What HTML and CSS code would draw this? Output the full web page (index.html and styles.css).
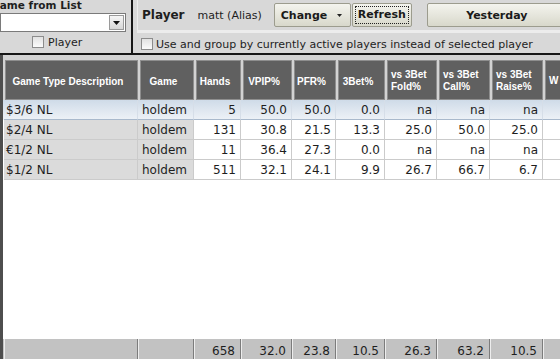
FILE: index.html
```html
<!DOCTYPE html>
<html>
<head>
	<meta charset="utf-8">
	<title>Player Stats</title>
	<link rel="stylesheet" href="styles.css">
</head>
<body>
	<div class="top">
		<div class="listPanel">
			<div class="listTitle">Name from List</div>
			<div class="combo">
				<span class="comboBtn">
					<svg width="7" height="4" viewBox="0 0 7 4"><path d="M0 0h7L3.5 4z" fill="#111"/></svg>
				</span>
			</div>
			<div class="chk"><span class="box"></span>Player</div>
		</div>
		<div class="playerPanel">
			<div class="playerRow">
				<span class="playerLabel">Player</span>
				<span class="playerName">matt (Alias)</span>
				<button class="btn change">Change <svg width="5" height="3" viewBox="0 0 5 3"><path d="M0 0h5L2.5 3z" fill="#222"/></svg></button>
				<button class="btn refresh"><span>Refresh</span></button>
				<button class="btn yesterday">Yesterday</button>
			</div>
			<div class="groupRow"><span class="box"></span>Use and group by currently active players instead of selected player</div>
		</div>
	</div>

	<div class="grid">
		<div class="row head">
			<div class="c">Game Type Description</div>
			<div class="c">Game</div>
			<div class="c">Hands</div>
			<div class="c">VPIP%</div>
			<div class="c">PFR%</div>
			<div class="c">3Bet%</div>
			<div class="c two">vs 3Bet<br>Fold%</div>
			<div class="c two">vs 3Bet<br>Call%</div>
			<div class="c two">vs 3Bet<br>Raise%</div>
			<div class="c two">W</div>
		</div>
		<div class="row data sel">
			<div class="c t">$3/6 NL</div>
			<div class="c t">holdem</div>
			<div class="c">5</div>
			<div class="c">50.0</div>
			<div class="c">50.0</div>
			<div class="c">0.0</div>
			<div class="c">na</div>
			<div class="c">na</div>
			<div class="c">na</div>
			<div class="c"></div>
		</div>
		<div class="row data">
			<div class="c t">$2/4 NL</div>
			<div class="c t">holdem</div>
			<div class="c">131</div>
			<div class="c">30.8</div>
			<div class="c">21.5</div>
			<div class="c">13.3</div>
			<div class="c">25.0</div>
			<div class="c">50.0</div>
			<div class="c">25.0</div>
			<div class="c"></div>
		</div>
		<div class="row data">
			<div class="c t">€1/2 NL</div>
			<div class="c t">holdem</div>
			<div class="c">11</div>
			<div class="c">36.4</div>
			<div class="c">27.3</div>
			<div class="c">0.0</div>
			<div class="c">na</div>
			<div class="c">na</div>
			<div class="c">na</div>
			<div class="c"></div>
		</div>
		<div class="row data">
			<div class="c t">$1/2 NL</div>
			<div class="c t">holdem</div>
			<div class="c">511</div>
			<div class="c">32.1</div>
			<div class="c">24.1</div>
			<div class="c">9.9</div>
			<div class="c">26.7</div>
			<div class="c">66.7</div>
			<div class="c">6.7</div>
			<div class="c"></div>
		</div>
		<div class="filler"></div>
		<div class="row foot">
			<div class="c"></div>
			<div class="c"></div>
			<div class="c">658</div>
			<div class="c">32.0</div>
			<div class="c">23.8</div>
			<div class="c">10.5</div>
			<div class="c">26.3</div>
			<div class="c">63.2</div>
			<div class="c">10.5</div>
			<div class="c"></div>
		</div>
	</div>
</body>
</html>
```

FILE: styles.css
```css
* {
	box-sizing: border-box;
}
body {
	margin: 0;
	width: 560px;
	height: 359px;
	overflow: hidden;
	display: flex;
	flex-direction: column;
	background: #d8d8d8;
	color: #1e1e1e;
	font-family: "DejaVu Sans", Verdana, sans-serif;
}

/* top bar */
.top {
	flex: none;
	display: flex;
	height: 55px;
	border-bottom: 2px solid #161616;
}
.listPanel {
	flex: none;
	width: 133px;
	display: flex;
	flex-direction: column;
	border-right: 2px solid #161616;
	overflow: hidden;
}
.listTitle {
	margin-left: -9px;
	font-size: 10.5px;
	font-weight: bold;
	line-height: 10px;
	white-space: nowrap;
}
.combo {
	display: flex;
	justify-content: flex-end;
	margin-top: 3px;
	width: 126px;
	height: 19px;
	padding: 1px;
	background: #fff;
	border: 1px solid #7a7a7a;
}
.comboBtn {
	display: flex;
	align-items: center;
	justify-content: center;
	width: 15px;
	background: linear-gradient(#f6f6f6, #d6d6d6);
	border: 1px solid #9a9a9a;
}
.chk {
	display: flex;
	align-items: center;
	gap: 4px;
	margin: 3px 0 0 32px;
	height: 14px;
	font-size: 11px;
}
.box {
	flex: none;
	width: 12px;
	height: 12px;
	border: 1px solid #8c8c8c;
	background: linear-gradient(#e2e2e2, #fbfbfb);
}
.playerPanel {
	flex: 1;
	display: flex;
	flex-direction: column;
	min-width: 0;
	overflow: hidden;
}
.playerRow {
	display: flex;
	align-items: center;
	height: 33px;
	margin-left: 4px;
	padding-left: 4px;
	border-left: 1px solid #ececec;
	border-bottom: 3px solid #ececec;
}
.playerLabel {
	flex: none;
	font-size: 12px;
	font-weight: bold;
}
.playerName {
	flex: none;
	margin-left: 13px;
	font-size: 11px;
	white-space: nowrap;
}
.btn {
	flex: none;
	height: 24px;
	padding: 0;
	border: 1px solid #9c9c8e;
	border-radius: 2px;
	background: linear-gradient(#f4f4ee, #d8d8cb);
	color: #1a1a1a;
	font-family: "DejaVu Sans", Verdana, sans-serif;
	font-size: 11px;
	font-weight: bold;
	white-space: nowrap;
}
.change {
	display: flex;
	align-items: center;
	justify-content: space-between;
	width: 77px;
	margin-left: 12px;
	padding: 0 8px 0 6px;
}
.refresh {
	width: 60px;
	margin-left: 1px;
}
.refresh span {
	display: block;
	margin: 0 2px;
	height: 18px;
	line-height: 16px;
	border: 1px dotted #222;
}
.yesterday {
	width: 140px;
	margin-left: 15px;
}
.groupRow {
	flex: 1;
	display: flex;
	align-items: center;
	gap: 3px;
	padding: 2px 0 0 8px;
	font-size: 11px;
	white-space: nowrap;
}

/* stats grid */
.grid {
	flex: 1;
	display: flex;
	flex-direction: column;
	border-left: 3px solid #4e4e4e;
	background: #fff;
}
.row {
	flex: none;
	display: grid;
	grid-template-columns: 134px 56px 47px 51px 44px 49px 52px 53px 53px 60px;
	padding-left: 1px;
}
.head {
	height: 45px;
	padding-top: 5px;
	background: #d2d2d2;
}
.head .c {
	display: flex;
	align-items: center;
	justify-content: center;
	margin-left: 2px;
	padding: 2px 7px 0 0;
	background: #606060;
	border: 1px solid #8e8e8e;
	color: #fff;
	font-family: "Liberation Sans", Arial, sans-serif;
	font-size: 10px;
	font-weight: bold;
	white-space: nowrap;
}
.head .c:first-child {
	margin-left: 1px;
}
.head .c.two {
	justify-content: flex-start;
	padding-left: 3px;
	line-height: 12px;
}
.data {
	height: 20px;
}
.data .c {
	padding-right: 4px;
	border-right: 1px solid #cbcbcb;
	border-bottom: 1px solid #cbcbcb;
	font-size: 12px;
	line-height: 21px;
	text-align: right;
	white-space: nowrap;
	overflow: hidden;
}
.data .c.t {
	padding-left: 2px;
	background: #dbdbdb;
	text-align: left;
}
.data .c.t + .c.t {
	padding-left: 4px;
}
.sel {
	background: linear-gradient(#cfdbe8, #eef2f7);
}
.sel .c {
	border-right-color: #d6dee8;
	border-bottom-color: #a9b9cc;
}
.sel .c.t {
	background: transparent;
}
.filler {
	flex: 1;
}
.foot {
	height: 20px;
	background: #c4c4c4;
}
.foot .c {
	padding: 2px 5px 0 0;
	background: #c2c2c2;
	border-left: 1px solid #ededed;
	border-right: 1px solid #7c7c7c;
	font-size: 12px;
	line-height: 20px;
	text-align: right;
	overflow: hidden;
}
```
